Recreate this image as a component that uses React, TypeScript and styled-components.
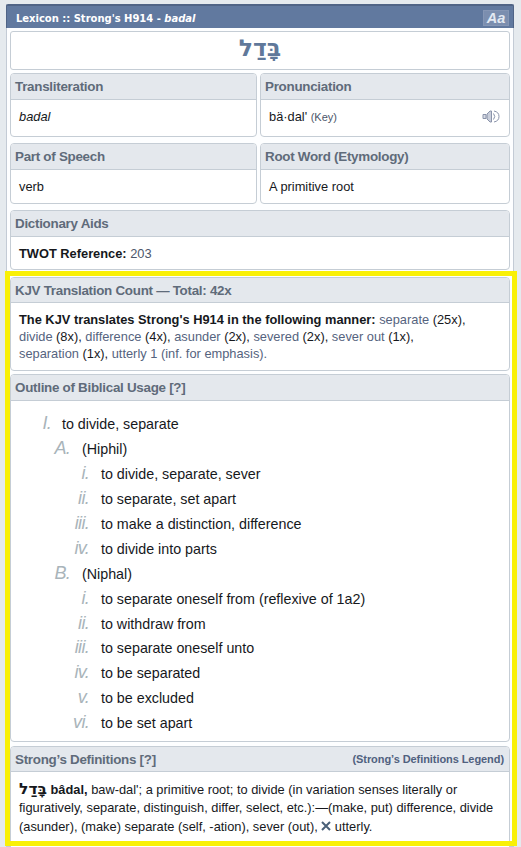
import React from 'react';
import styled, { createGlobalStyle } from 'styled-components';

const GlobalStyle = createGlobalStyle`
  * { box-sizing: border-box; }
  body {
    margin: 0;
    background: #e5eaee;
    font-family: "Liberation Sans", Arial, sans-serif;
    color: #16181c;
    overflow: hidden;
  }
`;

const Page = styled.div`
  position: relative;
  height: 847px;
  padding: 4px 7px 0 6px;
  overflow: hidden;
`;

const Panel = styled.main`
  height: 843px;
  background: #fdfeff;
  border: 1px solid #c3cbd5;
  border-top: 0;
`;

const TitleBar = styled.header`
  display: flex;
  align-items: center;
  justify-content: space-between;
  height: 24px;
  margin: 0 -1px 3px;
  padding: 3px 4px 0 9px;
  background: #61799f;
  border: 1px solid #506486;
  border-top-width: 2px;
  border-bottom: 0;
  border-radius: 2px 2px 0 0;
  font: bold 10px/15px "DejaVu Sans", Verdana, sans-serif;
  letter-spacing: -0.02px;
  color: #fff;
  white-space: nowrap;
`;

const FontButton = styled.button`
  width: 26px;
  height: 16px;
  margin-top: -2px;
  padding: 0;
  border: 1px solid #8596b5;
  background: #7b8eaf;
  color: #e3e9f2;
  font: italic bold 14.5px/14px "Liberation Sans", sans-serif;
`;

const Content = styled.div`
  display: flex;
  flex-direction: column;
  padding: 0 3px;
`;

const Word = styled.div`
  display: flex;
  justify-content: center;
  height: 39px;
  margin-bottom: 3px;
  border: 1px solid #c5cdd5;
  border-radius: 3px;
  background: #fff;
  color: #60789a;
  font: bold 23.5px/33px "DejaVu Sans", sans-serif;
`;

const Pair = styled.div`
  display: grid;
  grid-template-columns: 247px 250px;
  gap: 3px;
`;

const Card = styled.section<{ $h: number; $gap: number }>`
  height: ${(p) => p.$h}px;
  margin-bottom: ${(p) => p.$gap}px;
  border: 1px solid #c5cdd5;
  border-radius: 4px;
  background: #fff;
  overflow: hidden;
`;

const CardHead = styled.h2<{ $h?: number }>`
  display: flex;
  align-items: center;
  justify-content: space-between;
  height: ${(p) => p.$h ?? 26}px;
  margin: 0;
  padding: 0 5px 0 4px;
  border-bottom: 1px solid #c5cdd5;
  background: #e4e8ed;
  color: #5f6b7a;
  font-size: 13.4px;
  font-weight: bold;
  letter-spacing: -0.28px;
  white-space: nowrap;
`;

const Legend = styled.a`
  color: #50617f;
  font-size: 11px;
  letter-spacing: -0.07px;
`;

const CardBody = styled.div`
  display: flex;
  align-items: center;
  justify-content: space-between;
  height: 33px;
  padding: 0 9px 0 8px;
  font-size: 12.83px;
  white-space: nowrap;
`;

const Key = styled.a`
  color: #4c566a;
  font-size: 11px;
`;

const Muted = styled.span`
  color: #4c566a;
`;

const Paragraph = styled.div<{ $top: number }>`
  padding: ${(p) => p.$top}px 0 0 8px;
  font-size: 12.83px;
  white-space: nowrap;
`;

const Line = styled.div<{ $h: number }>`
  height: ${(p) => p.$h}px;
  line-height: ${(p) => p.$h}px;
`;

const Link = styled.a`
  color: #55637e;
`;

const Hebrew = styled.span`
  font: bold 15.5px/17px "DejaVu Sans", sans-serif;
`;

const Outline = styled.ol`
  margin: 0;
  padding: 10px 0 0;
  list-style: none;
`;

const OutlineItem = styled.li<{ $level: number }>`
  display: grid;
  grid-template-columns: ${(p) => [40, 59, 78][p.$level]}px 1fr;
  column-gap: ${(p) => [11, 12, 12][p.$level]}px;
  height: 24.95px;
  align-items: baseline;
  font-size: 14.3px;
  line-height: 25px;
  letter-spacing: -0.01px;
  white-space: nowrap;
`;

const Marker = styled.span`
  color: #a9b4ba;
  font-size: 18px;
  font-style: italic;
  line-height: 25px;
  letter-spacing: -0.7px;
  text-align: right;
`;

const Highlight = styled.div`
  position: absolute;
  left: 5px;
  top: 271px;
  width: 512px;
  height: 575px;
  border: 5px solid #f9f006;
  pointer-events: none;
`;

const Speaker = () => (
  <svg width="18" height="15" viewBox="0 0 18 15" fill="none" stroke="#8a93aa">
    <path d="M1 5.500h3v4H1z" fill="#d8dce6" />
    <path d="M5 5l3-3h1.500v11H8l-3-3z" fill="#c9cedb" />
    <path d="M11.500 4.500q2.500 3 0 6" />
    <path d="M12 2q5 1 5 5.500t-5 5.500" />
  </svg>
);

const Cross = () => (
  <svg width="10" height="10" viewBox="0 0 10 10" stroke="#4a6078" strokeWidth="2">
    <path d="M1 1l8 8M9 1L1 9" />
  </svg>
);

const outline: [number, string, string][] = [
  [0, 'I.', 'to divide, separate'],
  [1, 'A.', '(Hiphil)'],
  [2, 'i.', 'to divide, separate, sever'],
  [2, 'ii.', 'to separate, set apart'],
  [2, 'iii.', 'to make a distinction, difference'],
  [2, 'iv.', 'to divide into parts'],
  [1, 'B.', '(Niphal)'],
  [2, 'i.', 'to separate oneself from (reflexive of 1a2)'],
  [2, 'ii.', 'to withdraw from'],
  [2, 'iii.', 'to separate oneself unto'],
  [2, 'iv.', 'to be separated'],
  [2, 'v.', 'to be excluded'],
  [2, 'vi.', 'to be set apart'],
];

export default function App() {
  return (
    <Page>
      <GlobalStyle />
      <Panel>
        <TitleBar>
          <span>Lexicon :: Strong's H914 - <i>badal</i></span>
          <FontButton>Aa</FontButton>
        </TitleBar>
        <Content>
          <Word lang="he">בָּדַל</Word>
          <Pair>
            <Card $h={64} $gap={6}>
              <CardHead>Transliteration</CardHead>
              <CardBody><i>badal</i></CardBody>
            </Card>
            <Card $h={64} $gap={6}>
              <CardHead>Pronunciation</CardHead>
              <CardBody>
                <span>bä·dal' <Key>(Key)</Key></span>
                <Speaker />
              </CardBody>
            </Card>
          </Pair>
          <Pair>
            <Card $h={61} $gap={6}>
              <CardHead>Part of Speech</CardHead>
              <CardBody>verb</CardBody>
            </Card>
            <Card $h={61} $gap={6}>
              <CardHead>Root Word (Etymology)</CardHead>
              <CardBody>A primitive root</CardBody>
            </Card>
          </Pair>
          <Card $h={60} $gap={7}>
            <CardHead>Dictionary Aids</CardHead>
            <CardBody><span><b>TWOT Reference:</b> <Muted>203</Muted></span></CardBody>
          </Card>
          <Card $h={94} $gap={3}>
            <CardHead $h={25}>KJV Translation Count — Total: 42x</CardHead>
            <Paragraph $top={8}>
              <Line $h={17}><b>The KJV translates Strong's H914 in the following manner:</b> <Link>separate</Link> (25x),</Line>
              <Line $h={17}><Link>divide</Link> (8x), <Link>difference</Link> (4x), <Link>asunder</Link> (2x), <Link>severed</Link> (2x), <Link>sever out</Link> (1x),</Line>
              <Line $h={17}><Link>separation</Link> (1x), <Link>utterly 1 (inf. for emphasis).</Link></Line>
            </Paragraph>
          </Card>
          <Card $h={368} $gap={4}>
            <CardHead>Outline of Biblical Usage [?]</CardHead>
            <Outline>
              {outline.map(([level, mark, text], i) => (
                <OutlineItem key={i} $level={level}>
                  <Marker>{mark}</Marker>
                  <span>{text}</span>
                </OutlineItem>
              ))}
            </Outline>
          </Card>
          <Card $h={110} $gap={0}>
            <CardHead $h={25}>
              <span>Strong’s Definitions [?]</span>
              <Legend>(Strong’s Definitions Legend)</Legend>
            </CardHead>
            <Paragraph $top={9}>
              <Line $h={18}><Hebrew lang="he">בָּדַל</Hebrew> <b>bâdal,</b> baw-dal'; a primitive root; to divide (in variation senses literally or</Line>
              <Line $h={18}>figuratively, separate, distinguish, differ, select, etc.):—(make, put) difference, divide</Line>
              <Line $h={19}>(asunder), (make) separate (self, -ation), sever (out), <Cross /> utterly.</Line>
            </Paragraph>
          </Card>
        </Content>
      </Panel>
      <Highlight />
    </Page>
  );
}
